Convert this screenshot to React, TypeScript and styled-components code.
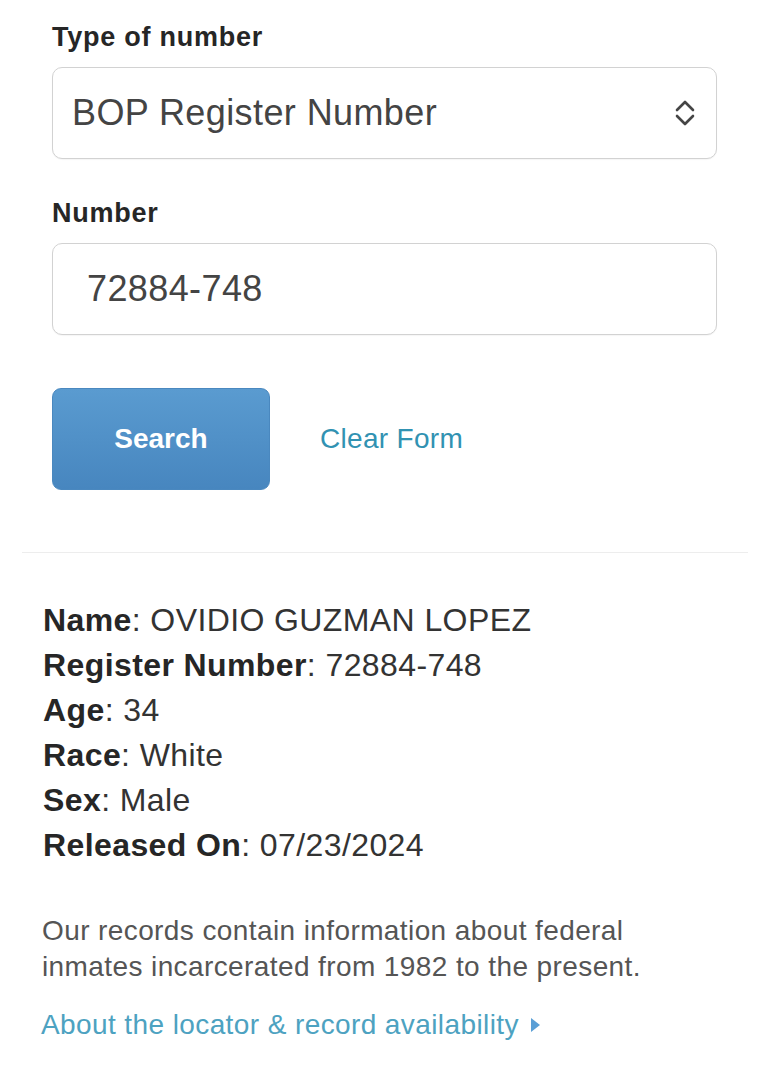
import styled, { createGlobalStyle } from 'styled-components';

const GlobalStyle = createGlobalStyle`
  html, body {
    margin: 0;
    padding: 0;
    background: #ffffff;
  }
  body {
    font-family: "Liberation Sans", Arial, Helvetica, sans-serif;
    color: #2a2a2a;
  }
`;

const Page = styled.div`
  width: 768px;
  min-height: 1071px;
  background: #ffffff;
`;

const SearchForm = styled.form`
  display: flex;
  flex-direction: column;
  padding: 21px 51px 0 52px;
`;

const FieldGroup = styled.div<{ $spaced?: boolean }>`
  display: flex;
  flex-direction: column;
  margin-top: ${({ $spaced }) => ($spaced ? '38px' : '0')};
`;

const FieldLabel = styled.label`
  font-size: 27px;
  line-height: 32px;
  font-weight: bold;
  letter-spacing: 0.75px;
  color: #262626;
  margin-bottom: 14px;
`;

const FieldBox = styled.div<{ $inset: number }>`
  display: flex;
  align-items: center;
  justify-content: space-between;
  box-sizing: border-box;
  height: 92px;
  padding: 0 20px 0 ${({ $inset }) => $inset}px;
  border: 1.5px solid #d2d2d2;
  border-radius: 10px;
  background: #ffffff;
  box-shadow: 0 1px 1px rgba(0, 0, 0, 0.04);
`;

const FieldValue = styled.span`
  font-size: 36px;
  letter-spacing: 0.4px;
  color: #444444;
`;

const ActionsRow = styled.div`
  display: flex;
  align-items: center;
  gap: 50px;
  margin-top: 53px;
`;

const SearchButton = styled.button`
  width: 218px;
  height: 102px;
  border: 1px solid #4a88bf;
  border-radius: 9px;
  background: linear-gradient(#5a9bd0, #4786bf);
  color: #ffffff;
  font-family: "Liberation Sans", Arial, Helvetica, sans-serif;
  font-size: 28px;
  font-weight: bold;
  cursor: pointer;
`;

const TextLink = styled.a<{ $tone?: string }>`
  font-size: 28px;
  letter-spacing: 0.3px;
  color: ${({ $tone }) => $tone ?? '#3192b2'};
  text-decoration: none;
`;

const Divider = styled.hr`
  margin: 62px 20px 0 22px;
  border: none;
  border-top: 1px solid #ededed;
`;

const Details = styled.dl`
  margin: 45px 0 0;
  padding: 0 0 0 43px;
`;

const DetailRow = styled.div`
  font-size: 32px;
  line-height: 45px;
  letter-spacing: 0.4px;
  color: #333333;
`;

const DetailKey = styled.dt`
  display: inline;
  font-weight: bold;
  color: #262626;
`;

const DetailValue = styled.dd`
  display: inline;
  margin: 0;
`;

const Notice = styled.p`
  margin: 45px 0 0;
  padding-left: 42px;
  font-size: 28px;
  line-height: 36px;
  letter-spacing: 0.4px;
  color: #555555;
`;

const AboutLink = styled(TextLink)`
  display: inline-flex;
  align-items: center;
  gap: 12px;
  margin: 22px 0 0 41px;
  line-height: 36px;
  letter-spacing: 0.4px;
`;

const Chevrons = () => (
  <svg width="22" height="30" viewBox="0 0 22 30" fill="none" stroke="#454545" strokeWidth="2.6" strokeLinecap="round" strokeLinejoin="round">
    <path d="M3 12 L11 4 L19 12" />
    <path d="M3 18 L11 26 L19 18" />
  </svg>
);

const Caret = () => (
  <svg width="9" height="14" viewBox="0 0 9 14">
    <path d="M0 0 L9 7 L0 14 Z" fill="#5a9fd6" />
  </svg>
);

const details = [
  { key: 'Name', value: 'OVIDIO GUZMAN LOPEZ' },
  { key: 'Register Number', value: '72884-748' },
  { key: 'Age', value: '34' },
  { key: 'Race', value: 'White' },
  { key: 'Sex', value: 'Male' },
  { key: 'Released On', value: '07/23/2024' },
];

export default function App() {
  return (
    <Page>
      <GlobalStyle />
      <SearchForm onSubmit={(e) => e.preventDefault()}>
        <FieldGroup>
          <FieldLabel>Type of number</FieldLabel>
          <FieldBox $inset={19}>
            <FieldValue>BOP Register Number</FieldValue>
            <Chevrons />
          </FieldBox>
        </FieldGroup>

        <FieldGroup $spaced>
          <FieldLabel>Number</FieldLabel>
          <FieldBox $inset={34}>
            <FieldValue>72884-748</FieldValue>
          </FieldBox>
        </FieldGroup>

        <ActionsRow>
          <SearchButton type="submit">Search</SearchButton>
          <TextLink href="#">Clear Form</TextLink>
        </ActionsRow>
      </SearchForm>

      <Divider />

      <Details>
        {details.map((d) => (
          <DetailRow key={d.key}>
            <DetailKey>{d.key}</DetailKey>: <DetailValue>{d.value}</DetailValue>
          </DetailRow>
        ))}
      </Details>

      <Notice>
        Our records contain information about federal
        <br />
        inmates incarcerated from 1982 to the present.
      </Notice>

      <AboutLink href="#" $tone="#4da2c1">
        About the locator &amp; record availability
        <Caret />
      </AboutLink>
    </Page>
  );
}
